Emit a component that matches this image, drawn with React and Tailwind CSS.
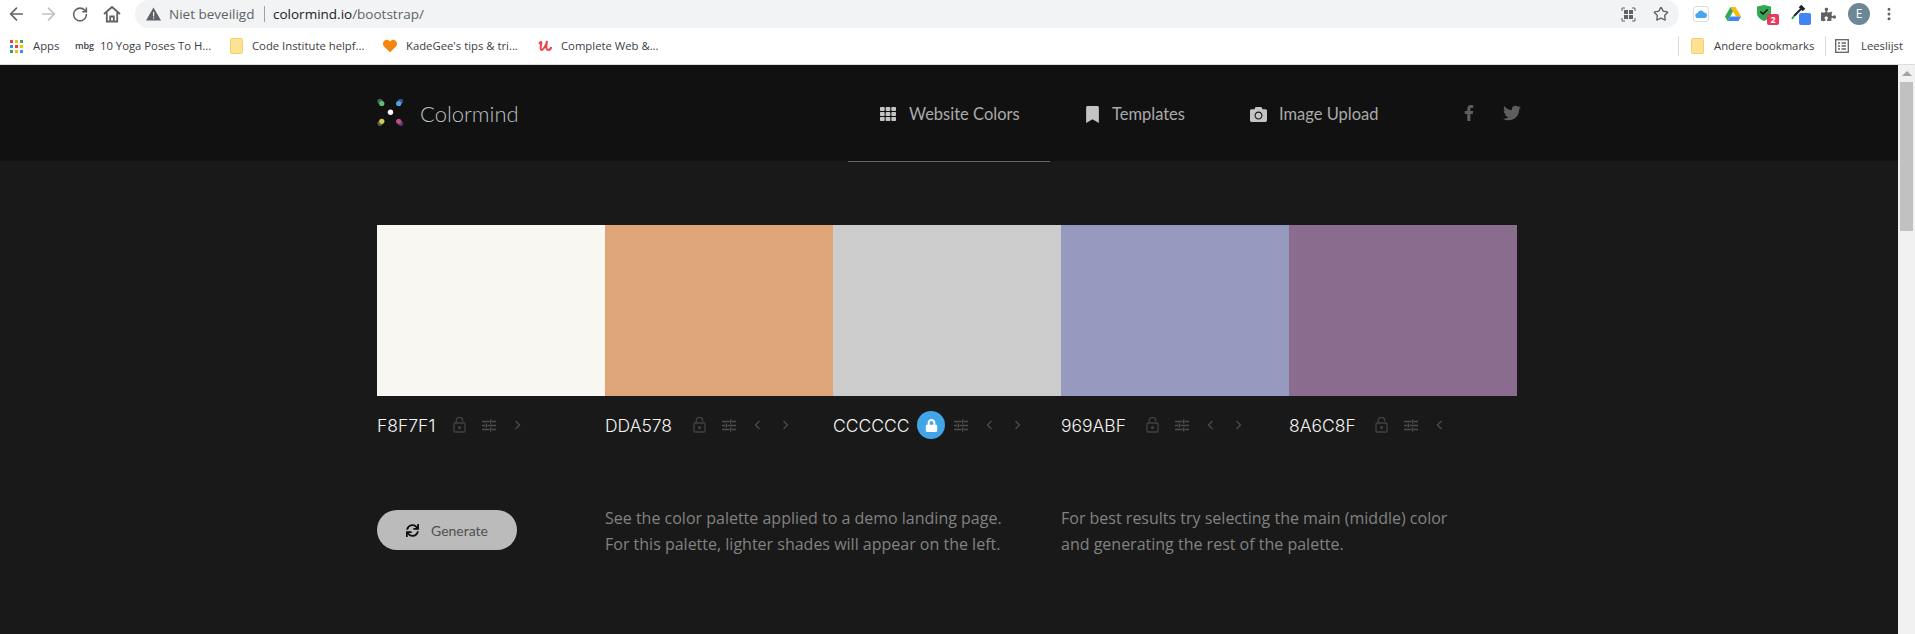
import React from 'react';
import { ArrowLeft, ArrowRight, RotateCw, Star, EllipsisVertical } from 'lucide-react';
import { FaTh, FaBookmark, FaCamera, FaFacebookF, FaTwitter, FaSync, FaPuzzlePiece, FaLock, FaHeart, FaCheck } from 'react-icons/fa';

const palette = [
  { hex: 'F8F7F1', bg: 'bg-[#f8f7f1]', labelW: 'w-[76px]', prev: false, next: true },
  { hex: 'DDA578', bg: 'bg-[#dda578]', labelW: 'w-[88px]', prev: true, next: true },
  { hex: 'CCCCCC', bg: 'bg-[#cccccc]', labelW: 'w-[84px]', prev: true, next: true, locked: true },
  { hex: '969ABF', bg: 'bg-[#969abf]', labelW: 'w-[85px]', prev: true, next: true },
  { hex: '8A6C8F', bg: 'bg-[#8a6c8f]', labelW: 'w-[86px]', prev: true, next: false },
];

const LockOutline = () => (
  <svg width="13" height="16" viewBox="0 0 13 16" fill="none" stroke="#424242" strokeWidth="1.300">
    <rect x="1" y="6" width="11" height="9" rx="1" />
    <path d="M3.200 6V3.600a3.300 3.300 0 0 1 6.600 0V4.500" />
    <circle cx="6.500" cy="10.500" r="0.900" fill="#424242" />
  </svg>
);

const Sliders = () => (
  <svg width="14" height="13" viewBox="0 0 14 13" fill="none" stroke="#4e4e4e" strokeWidth="1.400">
    <path d="M0 2.500h7.500M10 2.500h4M8.700 .5v4M0 6.500h3M5.500 6.500h8.500M4.300 4.500v4M0 10.500h7.500M10 10.500h4M8.700 8.500v4" />
  </svg>
);

const Chevron = ({ left }) => (
  <svg width="7" height="10" viewBox="0 0 7 10" fill="none" stroke="#4c4c4c" strokeWidth="1.300">
    <path d={left ? 'M5.500 1L1.500 5l4 4' : 'M1.500 1l4 4-4 4'} />
  </svg>
);

const FolderIcon = () => (
  <svg width="13" height="16" viewBox="0 0 13 16">
    <path d="M0.500 1.500a1 1 0 0 1 1-1h10a1 1 0 0 1 1 1v13a1 1 0 0 1-1 1h-10a1 1 0 0 1-1-1z" fill="#fde293" stroke="#f5cf6b" />
  </svg>
);

const AppsIcon = () => {
  const dots = ['#ea4335', '#fbbc04', '#34a853', '#4285f4', '#ea4335', '#fbbc04', '#34a853', '#fbbc04', '#4285f4'];
  return (
    <div className="grid grid-cols-3 gap-[2px] w-[13px]">
      {dots.map((c, i) => (
        <svg key={i} width="3" height="3"><rect width="3" height="3" fill={c} /></svg>
      ))}
    </div>
  );
};

const LogoDots = () => (
  <svg width="28" height="28" viewBox="0 0 28 28">
    <circle cx="3" cy="2.300" r="2.600" fill="#37695f" />
    <circle cx="4.800" cy="4.500" r="2.600" fill="#62bf70" />
    <circle cx="23.500" cy="2.300" r="2.600" fill="#34508a" />
    <circle cx="21.700" cy="4.500" r="2.600" fill="#4fa6e8" />
    <circle cx="13.500" cy="13.300" r="2.700" fill="#ffffff" />
    <circle cx="3" cy="24.300" r="2.600" fill="#5e5551" />
    <circle cx="4.800" cy="22.300" r="2.600" fill="#cfcb55" />
    <circle cx="23.500" cy="24.300" r="2.600" fill="#5f3572" />
    <circle cx="21.700" cy="22.300" r="2.600" fill="#c04d85" />
  </svg>
);

const DriveIcon = () => (
  <svg width="16" height="14" viewBox="0 0 16 14">
    <path d="M5.500 0h5L16 9.500h-5z" fill="#fbbc04" />
    <path d="M5.500 0L0 9.500 2.500 14 8 4.500z" fill="#34a853" />
    <path d="M2.500 14h11L16 9.500H5z" fill="#4285f4" />
  </svg>
);

const HomeIcon = () => (
  <svg width="18" height="18" viewBox="0 0 18 18" fill="none" stroke="#5f6368" strokeWidth="1.800" className="ml-[7px]">
    <path d="M1 9l8-7 8 7M3.800 7.500V16.500h10.400V7.500M7.200 16.500v-5h3.600v5" />
  </svg>
);

const Bookmark = ({ icon, label, iconWidth, className }) => (
  <div className={`flex items-center ${className}`}>
    <div className={`flex justify-center ${iconWidth}`}>{icon}</div>
    <span className="whitespace-nowrap">{label}</span>
  </div>
);

const NavLink = ({ icon, label, active, width }) => (
  <a className={`h-[97px] pt-[2px] pl-8 flex items-center border-b ${width} ${active ? 'border-[#666]' : 'border-transparent'}`}>
    {icon}
    <span className="whitespace-nowrap">{label}</span>
  </a>
);

const BrowserChrome = () => (
  <div className="bg-white font-['Open_Sans',sans-serif] text-[#3c4043]">
    <div className="h-[28px] flex items-center">
      <div className="w-[135px] flex items-center text-[#5f6368] shrink-0">
        <ArrowLeft size={20} strokeWidth={2} className="w-[33px]" />
        <ArrowRight size={20} strokeWidth={2} className="text-[#bdc1c6] w-[31px]" />
        <RotateCw size={17} strokeWidth={2.200} className="w-[32px]" />
        <HomeIcon />
      </div>
      <div className="h-full w-[1544px] bg-[#f1f3f4] rounded-[14px] flex items-center pl-[11px] pr-[10px] text-[13.500px]">
        <svg width="15" height="14" viewBox="0 0 15 14"><path d="M7.500 0.500L15 13.500H0z" fill="#5f6368" /><rect x="7" y="5" width="1.200" height="4.500" fill="#f1f3f4" /><rect x="7" y="10.500" width="1.200" height="1.300" fill="#f1f3f4" /></svg>
        <span className="ml-2 text-[#5f6368] whitespace-nowrap w-[85px]">Niet beveiligd</span>
        <span className="ml-[10px] w-px h-[16px] bg-[#9aa0a6]" />
        <span className="ml-2 whitespace-nowrap">
          <span className="text-[#202124]">colormind.io</span>
          <span className="text-[#5f6368]">/bootstrap/</span>
        </span>
        <div className="ml-auto flex items-center gap-[17px] text-[#5f6368]">
          <svg width="15" height="15" viewBox="0 0 15 15"><path d="M1 4V1h3M11 1h3v3M14 11v3h-3M4 14H1v-3" fill="none" stroke="#5f6368" /><rect x="3" y="3" width="4" height="4" fill="#5f6368" /><rect x="8" y="3" width="4" height="4" fill="#5f6368" /><rect x="3" y="8" width="4" height="4" fill="#5f6368" /><rect x="8" y="8" width="4" height="4" fill="#5f6368" /></svg>
          <Star size={16} strokeWidth={2} />
        </div>
      </div>
      <div className="flex-1 flex items-center pl-[14px]">
        <div className="w-[16px] h-[16px] rounded-[3px] border border-[#dadce0] flex items-center justify-center">
          <svg width="12" height="8" viewBox="0 0 12 8"><path d="M3 8a2.500 2.500 0 0 1-.4-5A3.500 3.500 0 0 1 9 2.400 2.800 2.800 0 0 1 9.300 8z" fill="#4aa5ee" /></svg>
        </div>
        <span className="ml-[16px]"><DriveIcon /></span>
        <div className="relative w-[14px] h-[16px] ml-[16px] -mt-[2px]">
          <svg width="14" height="16" viewBox="0 0 14 16"><path d="M0 1.500L7 0l7 1.500v7c0 3.500-3.500 6-7 7.500-3.500-1.500-7-4-7-7.500z" fill="#34a853" /></svg>
          <FaCheck className="absolute left-[3px] top-[3px] text-[8px] text-[#111]" />
          <span className="absolute left-[10px] top-[9px] w-[12px] h-[11px] rounded-[2px] bg-[#e8385e] text-white text-[9px] font-bold leading-[11px] text-center">2</span>
        </div>
        <div className="relative w-[20px] h-[20px] ml-[20px]">
          <svg width="15" height="16" viewBox="0 0 15 16" className="absolute left-0 top-0"><path d="M10 5L3 12" fill="none" stroke="#202124" strokeWidth="2" /><path d="M3 12l-2 3" stroke="#34a853" strokeWidth="2" /><path d="M9 2l4 4" stroke="#202124" strokeWidth="3.500" /></svg>
          <span className="absolute left-[8px] top-[9px] w-[12px] h-[12px] rounded-[2px] bg-[#4285f4]" />
        </div>
        <FaPuzzlePiece className="text-[15px] text-[#5f6368] ml-[10px]" />
        <div className="w-[22px] h-[22px] ml-[12px] rounded-full bg-[#6d8796] text-white text-[12px] leading-[22px] text-center">E</div>
        <EllipsisVertical size={16} strokeWidth={2.500} className="text-[#5f6368] ml-[11px]" />
      </div>
    </div>
    <div className="h-[36px] flex items-center text-[11.300px] text-[#3c4043] border-b border-[#dadce0] box-content">
      <Bookmark className="w-[76px] pl-[9px] gap-[10px]" iconWidth="w-[14px]" icon={<AppsIcon />} label="Apps" />
      <Bookmark className="w-[154px] gap-[7px]" iconWidth="w-[17px]" icon={<span className="text-[9px] font-semibold">mbg</span>} label="10 Yoga Poses To H..." />
      <Bookmark className="w-[152px] gap-[9px]" iconWidth="w-[13px]" icon={<FolderIcon />} label="Code Institute helpf..." />
      <Bookmark className="w-[156px] gap-[8px]" iconWidth="w-[16px]" icon={<FaHeart className="text-[14px] text-[#f5850d]" />} label="KadeGee's tips & tri..." />
      <Bookmark className="w-[140px] gap-[8px]" iconWidth="w-[15px]" icon={<svg width="15" height="13" viewBox="0 0 15 13"><path d="M1 4c2-3 3-3 2 1s0 7 3 3 3-7 3-7-2 9 1 9 3-3 3-3" fill="none" stroke="#e8444c" strokeWidth="2" /></svg>} label="Complete Web &..." />
      <div className="ml-auto flex items-center w-[237px] shrink-0">
        <span className="w-px h-[20px] bg-[#dadce0]" />
        <span className="ml-[12px]"><FolderIcon /></span>
        <span className="ml-[10px] whitespace-nowrap w-[101px]">Andere bookmarks</span>
        <span className="ml-[10px] w-px h-[20px] bg-[#dadce0]" />
        <svg width="14" height="14" viewBox="0 0 14 14" className="ml-[9px]" fill="none" stroke="#5f6368" strokeWidth="1.300"><rect x="0.700" y="0.700" width="12.600" height="12.600" /><path d="M3 4h2M6.500 4h4.500M3 7h2M6.500 7h4.500M3 10h2M6.500 10h4.500" /></svg>
        <span className="ml-[12px] whitespace-nowrap">Leeslijst</span>
      </div>
    </div>
  </div>
);

const SiteHeader = () => (
  <header className="bg-[#111111] h-[96px]">
    <div className="ml-[377px] h-full flex items-center font-['Lato',sans-serif]">
      <div className="w-[471px] flex items-center gap-[15px] text-[#b9c0c6] text-[22px] font-light">
        <LogoDots />
        <span>Colormind</span>
      </div>
      <nav className="self-start flex items-center text-[16.500px] text-[#aaaaaa]">
        <NavLink active width="w-[202px] mr-[2px]" icon={<FaTh className="text-[16px] text-[#c4c4c4] mr-[13px]" />} label="Website Colors" />
        <NavLink width="w-[166px]" icon={<FaBookmark className="text-[17px] text-[#c4c4c4] mr-[11px]" />} label="Templates" />
        <NavLink width="w-[198px]" icon={<FaCamera className="text-[17px] text-[#c4c4c4] mr-[12px]" />} label="Image Upload" />
      </nav>
      <div className="ml-[45px] flex items-center gap-[26px] text-[#5e5e5e] text-[16px]">
        <FaFacebookF />
        <FaTwitter className="text-[18px]" />
      </div>
    </div>
  </header>
);

const Swatch = ({ hex, prev, next, locked, labelW }) => (
  <div className="flex items-center h-[28px]">
    <span className={`mt-[2px] text-[17.500px] font-light text-[#f4f4f4] font-['Inter',sans-serif] leading-none ${labelW}`}>{hex}</span>
    {locked ? (
      <span className="w-[37px] shrink-0">
        <span className="w-[28px] h-[28px] rounded-full bg-[#42a5e8] flex items-center justify-center text-white text-[13px]"><FaLock /></span>
      </span>
    ) : (
      <span className="w-[29px] shrink-0"><LockOutline /></span>
    )}
    <span className="w-[32px] shrink-0"><Sliders /></span>
    {prev && <span className="w-[28px] shrink-0"><Chevron left /></span>}
    {next && <span className="w-[28px] shrink-0"><Chevron /></span>}
  </div>
);

const App = () => (
  <div className="h-[634px] overflow-hidden flex flex-col bg-[#191919]">
    <BrowserChrome />
    <div className="flex-1 flex min-h-0">
      <div className="flex-1 min-w-0">
        <SiteHeader />
        <main className="w-[1140px] ml-[377px] pt-[64px]">
          <div className="grid grid-cols-5 h-[171px]">
            {palette.map((c) => (
              <div key={c.hex} className={c.bg} />
            ))}
          </div>
          <div className="grid grid-cols-5 mt-[15px]">
            {palette.map((c) => (
              <Swatch key={c.hex} {...c} />
            ))}
          </div>
          <div className="grid grid-cols-5 mt-[71px]">
            <button className="w-[140px] h-[40px] rounded-full bg-[#bbbbbb] flex items-center justify-center gap-[12px] text-[14px] text-[#505050] font-['Lato',sans-serif]">
              <FaSync className="text-[13px] text-[#111]" />
              Generate
            </button>
            <p className="col-span-2 text-[16px] leading-[26px] text-[#828282] font-['Open_Sans',sans-serif] -mt-[5px]">
              See the color palette applied to a demo landing page.<br />
              For this palette, lighter shades will appear on the left.
            </p>
            <p className="col-span-2 text-[16px] leading-[26px] text-[#828282] font-['Open_Sans',sans-serif] -mt-[5px]">
              For best results try selecting the main (middle) color<br />
              and generating the rest of the palette.
            </p>
          </div>
        </main>
      </div>
      <aside className="w-[17px] bg-[#f1f1f1] flex flex-col items-center shrink-0">
        <div className="mt-[6px] w-0 h-0 border-x-[5px] border-x-transparent border-b-[5px] border-b-[#a3a3a3]" />
        <div className="mt-[6px] w-[13px] h-[149px] bg-[#c1c1c1]" />
      </aside>
    </div>
  </div>
);

export default App;
